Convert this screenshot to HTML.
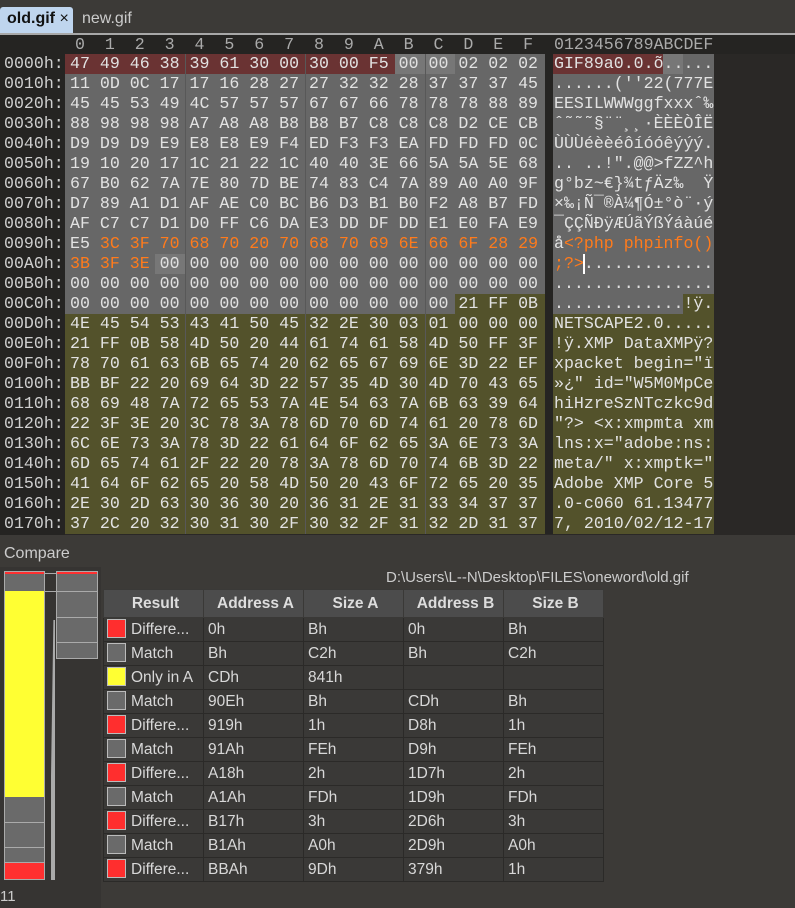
<!DOCTYPE html>
<html><head><meta charset="utf-8"><style>
*{margin:0;padding:0;box-sizing:border-box}
body{width:795px;height:908px;background:#2a2826;position:relative;overflow:hidden;font-family:"Liberation Sans",sans-serif}
.abs{position:absolute}
.mono{font-family:"Liberation Mono",monospace;font-size:16.6px;line-height:20px;white-space:pre;color:#e2e2e2}
.o{color:#ff7b1c}
.r{position:absolute;height:20px}
table{border-collapse:collapse;position:absolute;left:103px;top:589px;font-size:15.5px;color:#d8d8d8}
td,th{border:1px solid #2b2a28;height:24px;padding:0 0 0 4px;text-align:left;font-weight:normal}
th{background:#4c4c4c;height:28px;font-weight:bold;text-align:center;color:#ddd;border-color:#3a3937}
td{background:#3a3937}
.sw{display:inline-block;width:19px;height:19px;border:1px solid #bbb;vertical-align:middle;margin:-2px 5px 0 -1px}
</style></head><body>
<div class="abs" style="left:0;top:0;width:795px;height:34px;background:#3c3a37"></div>
<div class="abs" style="left:0;top:7px;width:73px;height:27px;background:#bfd5ee;border-radius:3px 3px 0 0"></div>
<div class="abs" style="left:7px;top:10px;font-size:16px;font-weight:bold;color:#111">old.gif <span style="font-weight:normal">×</span></div>
<div class="abs" style="left:82px;top:10px;font-size:16px;color:#ccc">new.gif</div>
<div class="abs" style="left:0;top:33px;width:795px;height:2px;background:#a8a8a8"></div>
<div class="abs" style="left:0;top:35px;width:65px;height:500px;background:#252422"></div>
<div class="abs" style="left:65px;top:35px;width:730px;height:19px;background:#252422"></div>
<div class="abs" style="left:65px;top:54px;width:480px;height:480px;background:#676767"></div>
<div class="abs" style="left:545px;top:54px;width:8px;height:480px;background:#252422"></div>
<div class="abs" style="left:553px;top:54px;width:161px;height:480px;background:#676767"></div>
<div class="r" style="left:65px;top:54px;width:330px;background:#6a3333"></div>
<div class="r" style="left:395px;top:54px;width:60px;background:#777"></div>
<div class="r" style="left:553px;top:54px;width:110px;background:#6a3333"></div>
<div class="r" style="left:663px;top:54px;width:20px;background:#777"></div>
<div class="r" style="left:155px;top:254px;width:30px;background:#777"></div>
<div class="r" style="left:455px;top:294px;width:90px;background:#53522b"></div>
<div class="r" style="left:683px;top:294px;width:31px;background:#53522b"></div>
<div class="abs" style="left:65px;top:314px;width:480px;height:220px;background:#53522b"></div>
<div class="abs" style="left:553px;top:314px;width:161px;height:220px;background:#53522b"></div>
<div class="abs" style="left:185px;top:54px;width:1px;height:480px;background:#585858"></div>
<div class="abs" style="left:305px;top:54px;width:1px;height:480px;background:#585858"></div>
<div class="abs" style="left:425px;top:54px;width:1px;height:480px;background:#585858"></div>
<div class="abs" style="left:583px;top:254px;width:2px;height:20px;background:#fff"></div>
<div class="abs mono" style="left:75px;top:35px;color:#aaa">0  1  2  3  4  5  6  7  8  9  A  B  C  D  E  F</div>
<div class="abs mono" style="left:554px;top:35px;color:#aaa">0123456789ABCDEF</div>
<div class="abs mono" style="left:4px;top:54px;color:#cfcfcf">0000h:
0010h:
0020h:
0030h:
0040h:
0050h:
0060h:
0070h:
0080h:
0090h:
00A0h:
00B0h:
00C0h:
00D0h:
00E0h:
00F0h:
0100h:
0110h:
0120h:
0130h:
0140h:
0150h:
0160h:
0170h:</div>
<div class="abs mono" style="left:70px;top:54px">47 49 46 38 39 61 30 00 30 00 F5 00 00 02 02 02
11 0D 0C 17 17 16 28 27 27 32 32 28 37 37 37 45
45 45 53 49 4C 57 57 57 67 67 66 78 78 78 88 89
88 98 98 98 A7 A8 A8 B8 B8 B7 C8 C8 C8 D2 CE CB
D9 D9 D9 E9 E8 E8 E9 F4 ED F3 F3 EA FD FD FD 0C
19 10 20 17 1C 21 22 1C 40 40 3E 66 5A 5A 5E 68
67 B0 62 7A 7E 80 7D BE 74 83 C4 7A 89 A0 A0 9F
D7 89 A1 D1 AF AE C0 BC B6 D3 B1 B0 F2 A8 B7 FD
AF C7 C7 D1 D0 FF C6 DA E3 DD DF DD E1 E0 FA E9
E5 <span class="o">3C 3F 70 68 70 20 70 68 70 69 6E 66 6F 28 29</span>
<span class="o">3B 3F 3E</span> 00 00 00 00 00 00 00 00 00 00 00 00 00
00 00 00 00 00 00 00 00 00 00 00 00 00 00 00 00
00 00 00 00 00 00 00 00 00 00 00 00 00 21 FF 0B
4E 45 54 53 43 41 50 45 32 2E 30 03 01 00 00 00
21 FF 0B 58 4D 50 20 44 61 74 61 58 4D 50 FF 3F
78 70 61 63 6B 65 74 20 62 65 67 69 6E 3D 22 EF
BB BF 22 20 69 64 3D 22 57 35 4D 30 4D 70 43 65
68 69 48 7A 72 65 53 7A 4E 54 63 7A 6B 63 39 64
22 3F 3E 20 3C 78 3A 78 6D 70 6D 74 61 20 78 6D
6C 6E 73 3A 78 3D 22 61 64 6F 62 65 3A 6E 73 3A
6D 65 74 61 2F 22 20 78 3A 78 6D 70 74 6B 3D 22
41 64 6F 62 65 20 58 4D 50 20 43 6F 72 65 20 35
2E 30 2D 63 30 36 30 20 36 31 2E 31 33 34 37 37
37 2C 20 32 30 31 30 2F 30 32 2F 31 32 2D 31 37</div>
<div class="abs mono" style="left:554px;top:54px">GIF89a0.0.õ.....
......(''22(777E
EESILWWWggfxxxˆ‰
ˆ˜˜˜§¨¨¸¸·ÈÈÈÒÎË
ÙÙÙéèèéôíóóêýýý.
.. ..!".@@&gt;fZZ^h
g°bz~€}¾tƒÄz‰  Ÿ
×‰¡Ñ¯®À¼¶Ó±°ò¨·ý
¯ÇÇÑÐÿÆÚãÝßÝáàúé
å<span class="o">&lt;?php phpinfo()</span>
<span class="o">;?&gt;</span>.............
................
.............!ÿ.
NETSCAPE2.0.....
!ÿ.XMP DataXMPÿ?
xpacket begin="ï
»¿" id="W5M0MpCe
hiHzreSzNTczkc9d
"?&gt; &lt;x:xmpmta xm
lns:x="adobe:ns:
meta/" x:xmptk="
Adobe XMP Core 5
.0-c060 61.13477
7, 2010/02/12-17</div>
<div class="abs" style="left:0;top:535px;width:795px;height:373px;background:#3c3a37"></div>
<div class="abs" style="left:4px;top:545px;font-size:16px;color:#ccc">Compare</div>
<div class="abs" style="left:0;top:567px;width:101px;height:341px;background:#363432"></div>
<div class="abs" style="left:4px;top:571px;width:41px;height:309px;border:1px solid #aaa;background:#6a6a6a"></div>
<div class="abs" style="left:5px;top:572px;width:39px;height:2px;background:#ff3030"></div>
<div class="abs" style="left:5px;top:591px;width:39px;height:206px;background:#ffff33"></div>
<div class="abs" style="left:4px;top:822px;width:41px;height:1px;background:#aaa"></div>
<div class="abs" style="left:4px;top:847px;width:41px;height:1px;background:#aaa"></div>
<div class="abs" style="left:4px;top:862px;width:41px;height:1px;background:#aaa"></div>
<div class="abs" style="left:5px;top:863px;width:39px;height:16px;background:#ff3030"></div>
<div class="abs" style="left:56px;top:571px;width:42px;height:88px;border:1px solid #aaa;background:#6a6a6a"></div>
<div class="abs" style="left:57px;top:572px;width:40px;height:2px;background:#ff3030"></div>
<div class="abs" style="left:56px;top:591px;width:42px;height:1px;background:#aaa"></div>
<div class="abs" style="left:56px;top:617px;width:42px;height:1px;background:#aaa"></div>
<div class="abs" style="left:56px;top:642px;width:42px;height:1px;background:#aaa"></div>
<div class="abs" style="left:45px;top:573px;width:11px;height:1px;background:#aaa"></div>
<div class="abs" style="left:45px;top:591px;width:11px;height:1px;background:#aaa"></div>
<div class="abs" style="left:51px;top:620px;width:4px;height:260px;background:#aaa;clip-path:polygon(60% 0,100% 0,100% 100%,0 100%,0 60%)"></div>
<div class="abs" style="left:0;top:888px;font-size:15px;color:#ccc">11</div>
<div class="abs" style="left:386px;top:569px;font-size:15px;color:#ccc">D:\Users\L--N\Desktop\FILES\oneword\old.gif</div>
<table>
<tr><th style="width:100px">Result</th><th style="width:100px">Address A</th><th style="width:100px">Size A</th><th style="width:100px">Address B</th><th style="width:100px">Size B</th></tr>
<tr><td><span class="sw" style="background:#ff2e2e"></span>Differe...</td><td>0h</td><td>Bh</td><td>0h</td><td>Bh</td></tr>
<tr><td><span class="sw" style="background:#6a6a6a"></span>Match</td><td>Bh</td><td>C2h</td><td>Bh</td><td>C2h</td></tr>
<tr><td><span class="sw" style="background:#ffff33"></span>Only in A</td><td>CDh</td><td>841h</td><td></td><td></td></tr>
<tr><td><span class="sw" style="background:#6a6a6a"></span>Match</td><td>90Eh</td><td>Bh</td><td>CDh</td><td>Bh</td></tr>
<tr><td><span class="sw" style="background:#ff2e2e"></span>Differe...</td><td>919h</td><td>1h</td><td>D8h</td><td>1h</td></tr>
<tr><td><span class="sw" style="background:#6a6a6a"></span>Match</td><td>91Ah</td><td>FEh</td><td>D9h</td><td>FEh</td></tr>
<tr><td><span class="sw" style="background:#ff2e2e"></span>Differe...</td><td>A18h</td><td>2h</td><td>1D7h</td><td>2h</td></tr>
<tr><td><span class="sw" style="background:#6a6a6a"></span>Match</td><td>A1Ah</td><td>FDh</td><td>1D9h</td><td>FDh</td></tr>
<tr><td><span class="sw" style="background:#ff2e2e"></span>Differe...</td><td>B17h</td><td>3h</td><td>2D6h</td><td>3h</td></tr>
<tr><td><span class="sw" style="background:#6a6a6a"></span>Match</td><td>B1Ah</td><td>A0h</td><td>2D9h</td><td>A0h</td></tr>
<tr><td><span class="sw" style="background:#ff2e2e"></span>Differe...</td><td>BBAh</td><td>9Dh</td><td>379h</td><td>1h</td></tr>
</table>
</body></html>
